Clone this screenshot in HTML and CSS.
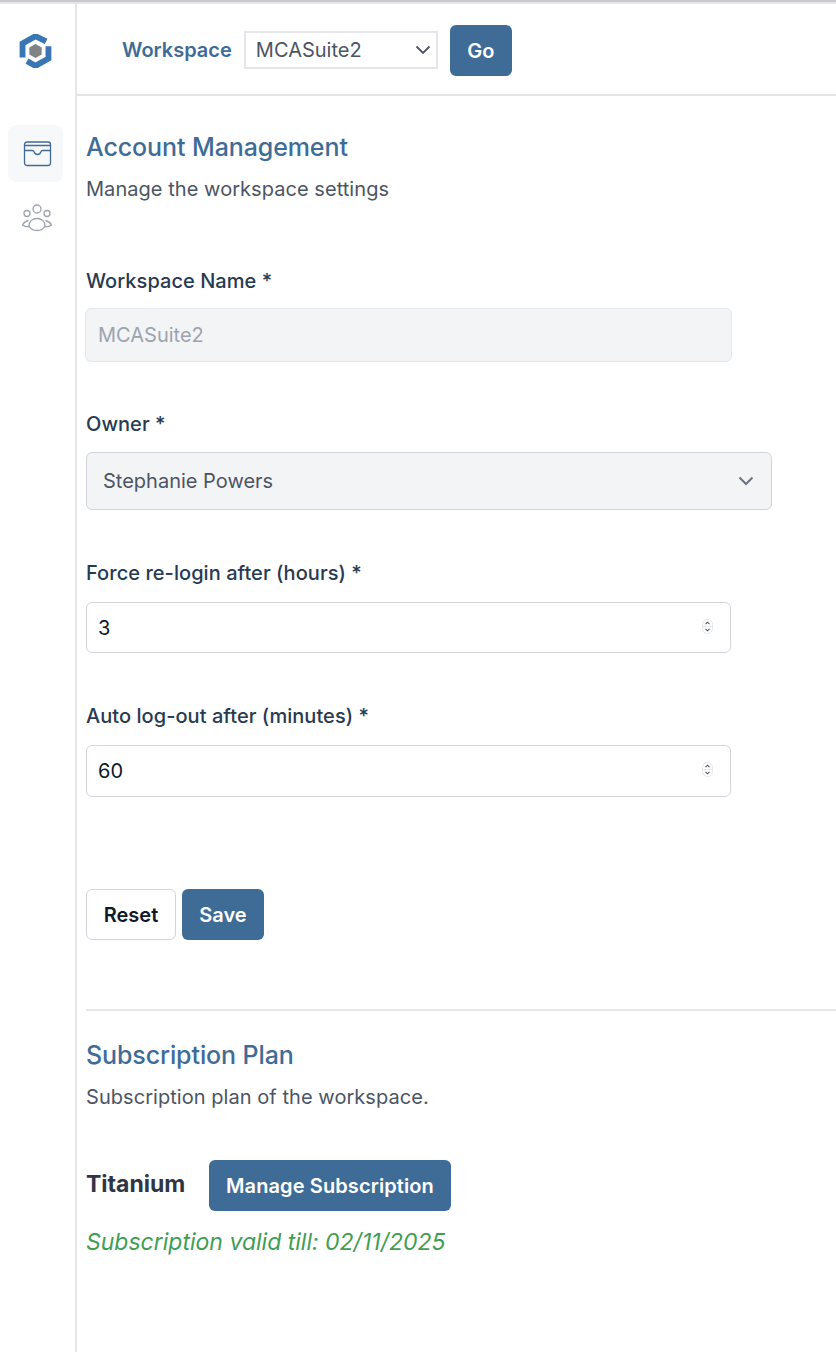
FILE: index.html
```html
<!DOCTYPE html>
<html lang="en">
<head>
  <meta charset="UTF-8">
  <title>Account Management</title>
  <link rel="stylesheet" href="styles.css">
</head>
<body>
  <div class="app">
    <nav class="sidebar">
      <svg class="logo" width="35" height="34" viewBox="2 1 30 32" fill="none" stroke="#3a76b4" stroke-width="5.500">
        <path d="M27 8 17 3 4.800 10 4.800 23"/>
        <path d="M29.200 12.500 29.200 24 17 31 9 26.500"/>
        <path d="M17 10.500 22.800 13.800 22.800 20.200 17 23.500 11.200 20.200 11.200 13.800Z" fill="#808285" stroke="none"/>
      </svg>
      <a class="nav-item active">
        <svg width="30" height="28" viewBox="0 0 30 28" fill="none" stroke="#3f6c96" stroke-width="1.300">
          <rect x="1.500" y="2" width="26" height="23.500" rx="2.500"/>
          <path d="M1.500 5.500h26M1.500 10.500h8c1 0 1.300.4 1.700 1.500.5 1.700 1.800 2.500 3.300 2.500s2.800-.8 3.300-2.500c.4-1.100.7-1.500 1.700-1.500h8"/>
        </svg>
      </a>
      <a class="nav-item people">
        <svg width="32" height="28" viewBox="0 0 32 28" fill="none" stroke="#9ca3af" stroke-width="1.300">
          <circle cx="16" cy="5" r="4"/>
          <circle cx="6" cy="9.500" r="3"/>
          <circle cx="26" cy="9.500" r="3"/>
          <path d="M8 22c0-5 3.500-7.500 8-7.500s8 2.500 8 7.500c-1.500 3-4.500 4.500-8 4.500s-6.500-1.500-8-4.500Z"/>
          <path d="M7.500 16.500C5 17 2.500 19 1.500 21c1.500 1.300 3.500 1.800 6.500 1.800M24.500 16.500c2.500.5 5 2.500 6 4.500-1.500 1.300-3.500 1.800-6.500 1.800"/>
        </svg>
      </a>
    </nav>

    <div class="content">
      <header class="topbar">
        <span class="topbar-label">Workspace</span>
        <div class="select-wrap topbar-select">
          <select class="workspace-select">
            <option>MCASuite2</option>
          </select>
          <svg class="chevron" width="16" height="10" viewBox="0 0 16 10" fill="none" stroke="#4b5563" stroke-width="1.800"><path d="M1.500 1.500 8 8l6.500-6.500"/></svg>
        </div>
        <button class="btn btn-primary btn-go">Go</button>
      </header>

      <main class="main">
        <section class="account">
          <h2 class="heading">Account Management</h2>
          <p class="subtext">Manage the workspace settings</p>

          <div class="field field-name">
            <label>Workspace Name *</label>
            <input class="input input-disabled" type="text" value="MCASuite2" disabled>
          </div>

          <div class="field field-owner">
            <label>Owner *</label>
            <div class="select-wrap owner-wrap">
              <select class="owner-select" disabled>
                <option>Stephanie Powers</option>
              </select>
              <svg class="chevron" width="16" height="10" viewBox="0 0 16 10" fill="none" stroke="#6b7280" stroke-width="2"><path d="M1.500 1.500 8 8l6.500-6.500"/></svg>
            </div>
          </div>

          <div class="field field-relogin">
            <label>Force re-login after (hours) *</label>
            <div class="number-wrap">
              <input class="input input-number" type="text" value="3">
              <svg class="spinner" width="11" height="15" viewBox="0 0 11 15" fill="none">
                <rect x=".5" y=".5" width="10" height="14" rx="5" fill="#fff" stroke="#e5e7eb"/>
                <path d="M.5 7.500h10" stroke="#e5e7eb"/>
                <path d="M3.500 5.200 5.500 3.200l2 2M3.500 9.800l2 2 2-2" stroke="#4b5563" stroke-width="1.100"/>
              </svg>
            </div>
          </div>

          <div class="field field-logout">
            <label>Auto log-out after (minutes) *</label>
            <div class="number-wrap">
              <input class="input input-number input-tall" type="text" value="60">
              <svg class="spinner" width="11" height="15" viewBox="0 0 11 15" fill="none">
                <rect x=".5" y=".5" width="10" height="14" rx="5" fill="#fff" stroke="#e5e7eb"/>
                <path d="M.5 7.500h10" stroke="#e5e7eb"/>
                <path d="M3.500 5.200 5.500 3.200l2 2M3.500 9.800l2 2 2-2" stroke="#4b5563" stroke-width="1.100"/>
              </svg>
            </div>
          </div>

          <div class="actions">
            <button class="btn btn-outline">Reset</button>
            <button class="btn btn-primary btn-save">Save</button>
          </div>
        </section>

        <section class="subscription">
          <h2 class="heading">Subscription Plan</h2>
          <p class="subtext">Subscription plan of the workspace.</p>
          <div class="plan-row">
            <span class="plan-name">Titanium</span>
            <button class="btn btn-primary btn-manage">Manage Subscription</button>
          </div>
          <p class="valid-till">Subscription valid till: 02/11/2025</p>
        </section>
      </main>
    </div>
  </div>
</body>
</html>
```

FILE: styles.css
```css
* {
  box-sizing: border-box;
}

html, body {
  height: 100%;
}

body {
  margin: 0;
  background: #fff;
  font-family: Inter, "Liberation Sans", sans-serif;
  color: #1f2937;
  overflow: hidden;
}

.app {
  display: flex;
  min-height: 1352px;
  border-top: 2px solid #c9cacc;
  box-shadow: inset 0 2px 0 #e5e5ea;
  padding-top: 2px;
}

/* Sidebar */
.sidebar {
  width: 77px;
  flex: none;
  border-right: 2px solid #e5e5ea;
  margin-top: -2px;
  padding: 32px 0 0 8px;
  display: flex;
  flex-direction: column;
}

.logo {
  margin: 0 0 0 10px;
}

.nav-item {
  width: 55px;
  height: 57px;
  border-radius: 8px;
  display: flex;
  align-items: center;
  justify-content: center;
}

.nav-item.active {
  background: #f7f8fa;
  margin-top: 57px;
  padding-left: 4px;
}

.nav-item.people {
  height: 72px;
  padding-left: 3px;
}

/* Top bar */
.content {
  flex: 1;
  min-width: 0;
}

.topbar {
  height: 92px;
  border-bottom: 2px solid #e5e5ea;
  padding: 21px 0 0 45px;
  display: flex;
  align-items: flex-start;
}

.topbar-label {
  font-size: 20px;
  font-weight: 600;
  color: #3f6c96;
  margin-top: 12px;
  line-height: 26px;
}

.select-wrap {
  position: relative;
}

.topbar-select {
  margin: 6px 0 0 12px;
}

.workspace-select {
  appearance: none;
  width: 194px;
  height: 38px;
  border: 2px solid #e5e5ea;
  background: #fff;
  padding: 0 0 0 10px;
  font: 400 20px Inter, sans-serif;
  color: #4b5563;
  opacity: 1;
}

.chevron {
  position: absolute;
  right: 7px;
  top: 14px;
  pointer-events: none;
}

.btn {
  border: none;
  border-radius: 6px;
  height: 51px;
  font: 600 20px Inter, sans-serif;
  padding: 0;
}

.btn-primary {
  background: #3f6c96;
  color: #fff;
}

.btn-go {
  width: 62px;
  margin-left: 12px;
}

/* Form */
.main {
  padding: 0 0 0 9px;
}

.heading {
  margin: 0;
  font-size: 25px;
  font-weight: 500;
  line-height: 34px;
  letter-spacing: -0.1px;
  color: #3f6c96;
}

.subtext {
  margin: 12px 0 0;
  font-size: 20px;
  line-height: 26px;
  letter-spacing: 0.05px;
  color: #4b5563;
}

.account {
  padding-top: 34px;
}

.field label {
  display: block;
  font-size: 20px;
  font-weight: 500;
  line-height: 26px;
  letter-spacing: 0.05px;
  color: #283a4f;
}

.field-name {
  margin-top: 66px;
}

.field-owner {
  margin-top: 49px;
}

.field-relogin {
  margin-top: 50px;
}

.field-logout {
  margin-top: 50px;
}

.input {
  display: block;
  font: 400 20px Inter, sans-serif;
  border: 1px solid #d1d5db;
  border-radius: 6px;
  width: 645px;
  height: 51px;
  padding: 0 11px;
  color: #111827;
  background: #fff;
}

.input-tall {
  height: 52px;
}

.input-disabled {
  width: 647px;
  height: 54px;
  margin: 14px 0 0 -1px;
  padding: 0 12px;
  background: #f3f4f6;
  border-color: #e5e7eb;
  color: #9ca3af;
}

.owner-wrap {
  width: 686px;
  margin-top: 15px;
}

.owner-select {
  appearance: none;
  display: block;
  width: 100%;
  height: 58px;
  border: 1px solid #d1d5db;
  border-radius: 6px;
  background: #f3f4f6;
  padding: 0 16px;
  font: 400 20px Inter, sans-serif;
  color: #4b5563;
  opacity: 1;
}

.owner-wrap .chevron {
  right: 18px;
  top: 24px;
}

.number-wrap {
  position: relative;
  width: 645px;
  margin-top: 16px;
}

.spinner {
  position: absolute;
  right: 18px;
  top: 17px;
}

.actions {
  display: flex;
  gap: 6px;
  margin-top: 92px;
}

.btn-outline {
  width: 90px;
  background: #fff;
  border: 1px solid #d1d5db;
  color: #111827;
}

.btn-save {
  width: 82px;
}

/* Subscription */
.subscription {
  margin-top: 69px;
  border-top: 2px solid #e5e5ea;
  padding-top: 27px;
}

.plan-row {
  display: flex;
  align-items: flex-start;
  margin-top: 50px;
}

.plan-name {
  width: 123px;
  font-size: 23px;
  font-weight: 700;
  line-height: 30px;
  color: #2f3544;
  margin-top: 9px;
}

.btn-manage {
  width: 242px;
  letter-spacing: 0.1px;
}

.valid-till {
  margin: 17px 0 0;
  font-size: 23px;
  line-height: 28px;
  font-style: italic;
  color: #3f9e52;
}
```
